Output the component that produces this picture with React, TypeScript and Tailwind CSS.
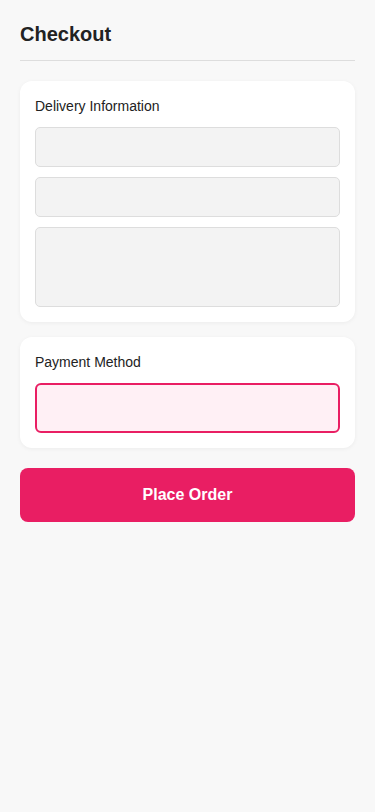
export default function App() {
  return (
    <div className="min-h-[812px] bg-[#f8f8f8] p-5 font-['Liberation_Sans',Arial,sans-serif] text-[#222]">
      <div className="border-b border-[#dddddd] pb-[12px]">
        <h1 className="text-[20px] font-bold leading-[28px]">Checkout</h1>
      </div>

      <div className="mt-5 rounded-xl bg-white p-[15px] shadow-[0_1px_4px_rgba(0,0,0,0.05)]">
        <div className="text-[14px] leading-5">Delivery Information</div>
        <div className="mt-[11px] flex flex-col gap-[10px]">
          <div className="h-10 rounded-[5px] border border-[#dddddd] bg-[#f3f3f3]" />
          <div className="h-10 rounded-[5px] border border-[#dddddd] bg-[#f3f3f3]" />
          <div className="h-20 rounded-[5px] border border-[#dddddd] bg-[#f3f3f3]" />
        </div>
      </div>

      <div className="mt-[15px] rounded-xl bg-white p-[15px] shadow-[0_1px_4px_rgba(0,0,0,0.05)]">
        <div className="text-[14px] leading-5">Payment Method</div>
        <div className="mt-[11px] h-[50px] rounded-[6px] border-2 border-[#e91e63] bg-[#fff0f5]" />
      </div>

      <button className="mt-5 flex h-[54px] w-full items-center justify-center rounded-lg bg-[#e91e63] text-[16px] font-bold text-white">
        Place Order
      </button>
    </div>
  );
}
